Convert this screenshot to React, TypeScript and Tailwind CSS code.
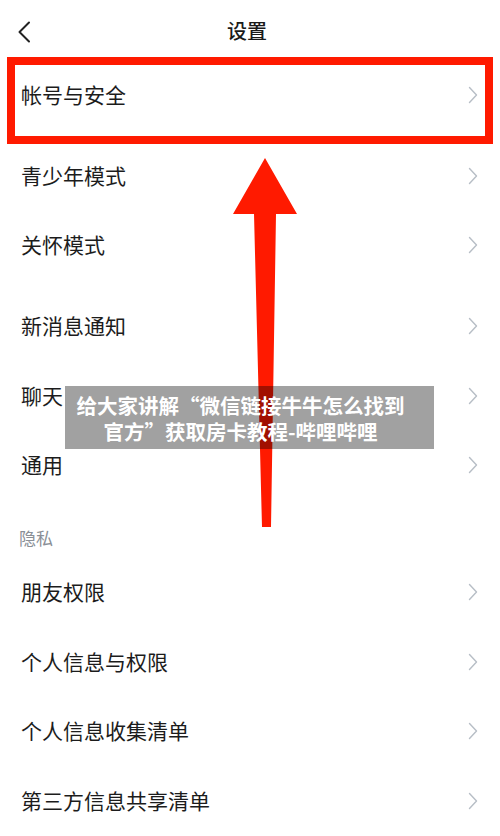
import React from "react";

const Chevron = () => (
  <svg width="10" height="18" viewBox="0 0 10 18" className="shrink-0">
    <path d="M1.5 1.5 L8.5 9 L1.5 16.5" fill="none" stroke="#b7bec6" strokeWidth="1.4" strokeLinecap="round" strokeLinejoin="round" />
  </svg>
);

const Row = ({ label, h }: { label: string; h: string }) => (
  <div className={`flex items-center justify-between pl-[21px] pr-[22px] ${h}`}>
    <span className="text-[21px] text-[#1c1c1c]">{label}</span>
    <Chevron />
  </div>
);

export default function App() {
  return (
    <div
      className="relative w-[500px] h-[836px] overflow-hidden bg-white"
      style={{ fontFamily: '"Noto Sans CJK SC", "Noto Sans", sans-serif' }}
    >
      {/* Header */}
      <div className="relative flex items-center justify-center h-[60px]">
        <svg width="14" height="22" viewBox="0 0 14 22" className="absolute left-[17px] top-[21px]">
          <path d="M12 1.5 L2.5 11 L12 20.5" fill="none" stroke="#222" strokeWidth="2" strokeLinecap="round" strokeLinejoin="round" />
        </svg>
        <span className="text-[20px] font-medium text-[#1a1a1a] mt-[2px] mr-[6px]">设置</span>
      </div>

      <div className="flex flex-col">
        <Row label="帐号与安全" h="h-[70px]" />
        <div className="h-[11px]" />
        <Row label="青少年模式" h="h-[69px]" />
        <Row label="关怀模式" h="h-[70px]" />
        <div className="h-[10px]" />
        <Row label="新消息通知" h="h-[71px]" />
        <Row label="聊天" h="h-[69px]" />
        <Row label="通用" h="h-[70px]" />
        <div className="flex items-center pl-[19px] h-[57px] pt-[19px]">
          <span className="text-[17px] text-[#8a8f96]">隐私</span>
        </div>
        <Row label="朋友权限" h="h-[70px]" />
        <Row label="个人信息与权限" h="h-[69px]" />
        <Row label="个人信息收集清单" h="h-[70px]" />
        <Row label="第三方信息共享清单" h="h-[70px]" />
      </div>

      {/* Red annotation box */}
      <div className="absolute left-[7px] top-[57px] w-[486px] h-[87px] border-[8px] border-[#ff1a00]" />

      {/* Red arrow */}
      <svg className="absolute left-0 top-0" width="500" height="836" viewBox="0 0 500 836">
        <polygon
          points="265,158 297,214 276,214 271,527 262,527 254,214 233,214"
          fill="#ff1a00"
        />
      </svg>

      {/* Watermark caption */}
      <div className="absolute left-[65px] top-[386px] w-[369px] h-[63px] pr-[18px] bg-black/[0.37] flex items-center justify-center">
        <p className="text-white font-bold text-[20.5px] leading-[26px] whitespace-nowrap text-center">
          给大家讲解“微信链接牛牛怎么找到
          <br />
          官方”获取房卡教程-哔哩哔哩
        </p>
      </div>
    </div>
  );
}
